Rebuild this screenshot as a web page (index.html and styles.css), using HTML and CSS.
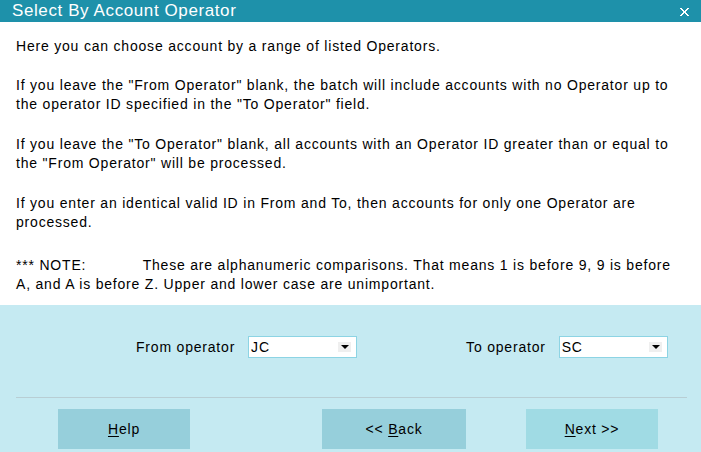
FILE: index.html
```html
<!DOCTYPE html>
<html>
<head>
<meta charset="utf-8">
<link rel="stylesheet" href="styles.css">
</head>
<body>
<div class="dialog">
  <div class="titlebar">
    <span class="title">Select By Account Operator</span>
    <svg class="close" width="9" height="8" viewBox="0 0 9 8"><path d="M0 0h2v1h1v1h1v1h1V2h1V1h1V0h2v1H8v1H7v1H6v2h1v1h1v1h1v1H7V7H6V6H5V5H4v1H3v1H2v1H0V7h1V6h1V5h1V3H2V2H1V1H0z" fill="#fff"/></svg>
  </div>
  <div class="content">
    <p class="intro">Here you can choose account by a range of listed Operators.</p>
    <p>If you leave the "From Operator" blank, the batch will include accounts with no Operator up to the operator ID specified in the "To Operator" field.</p>
    <p>If you leave the "To Operator" blank, all accounts with an Operator ID greater than or equal to the "From Operator" will be processed.</p>
    <p>If you enter an identical valid ID in From and To, then accounts for only one Operator are processed.</p>
    <p class="note"><span class="note-label">*** NOTE:</span> These are alphanumeric comparisons. That means 1 is before 9, 9 is before A, and A is before Z. Upper and lower case are unimportant.</p>
  </div>
  <div class="footer">
    <div class="fields">
      <div class="field from">
        <span class="label">From operator</span>
        <div class="combo"><span class="value">JC</span><span class="arrow"></span></div>
      </div>
      <div class="field to">
        <span class="label">To operator</span>
        <div class="combo"><span class="value">SC</span><span class="arrow"></span></div>
      </div>
    </div>
    <div class="separator"></div>
    <div class="buttons">
      <div class="btn help"><span><u>H</u>elp</span></div>
      <div class="btn back"><span>&lt;&lt; <u>B</u>ack</span></div>
      <div class="btn next"><span><u>N</u>ext &gt;&gt;</span></div>
    </div>
  </div>
</div>
</body>
</html>
```
FILE: styles.css
```css
* { box-sizing: border-box; }
html, body { margin: 0; padding: 0; }
body {
  width: 701px;
  height: 452px;
  overflow: hidden;
  font-family: "Liberation Sans", Arial, sans-serif;
  color: #000;
  background: #c5eaf2;
  letter-spacing: 0.8px;
}
.dialog {
  width: 701px;
  height: 452px;
  display: flex;
  flex-direction: column;
}
.titlebar {
  height: 22px;
  background: #1e91aa;
  display: flex;
  align-items: center;
  justify-content: space-between;
  padding: 0 12px 0 12px;
  flex: none;
}
.title {
  color: #fff;
  font-size: 17px;
  line-height: 22px;
  letter-spacing: 0.6px;
}
.close { display: block; margin-top: 1px; }
.content {
  background: #fff;
  height: 283px;
  padding: 15px 22px 0 16px;
  font-size: 14px;
  line-height: 19px;
  flex: none;
}
.content p {
  margin: 0 0 21px 0;
}
.content p.intro { margin-bottom: 20px; }
.content p.note { margin-top: 24px; }
.note-label {
  margin-right: 52px;
}
.footer {
  flex: 1;
  background: #c5eaf2;
  display: flex;
  flex-direction: column;
}
.fields {
  display: flex;
  height: 92px;
  padding-top: 31px;
  font-size: 14px;
}
.field {
  display: flex;
  align-items: flex-start;
}
.field .label {
  line-height: 22px;
  margin-right: 13px;
}
.field.from { margin-left: 136px; }
.field.to { margin-left: 109px; }
.combo {
  width: 109px;
  height: 22px;
  background: #fff;
  border: 1px solid #8dd4e4;
  display: flex;
  align-items: center;
  justify-content: space-between;
  padding: 0 5px 0 2px;
}
.combo .value { line-height: 20px; font-size: 14px; }
.combo .arrow {
  width: 13px;
  height: 10px;
  background: #efefef;
  position: relative;
}
.combo .arrow::after {
  content: "";
  position: absolute;
  left: 3px;
  top: 3px;
  border-left: 4px solid transparent;
  border-right: 4px solid transparent;
  border-top: 4px solid #000;
}
.separator {
  height: 1px;
  background: #b8ced4;
  margin: 0 14px 0 16px;
}
.buttons {
  display: flex;
  padding-top: 11px;
}
.btn {
  height: 40px;
  display: flex;
  align-items: center;
  justify-content: center;
  font-size: 14px;
  background: #96cfdb;
}
.btn u { text-underline-offset: 2px; }
.btn.help { width: 132px; margin-left: 58px; }
.btn.back { width: 144px; margin-left: 132px; }
.btn.next { width: 132px; margin-left: 60px; background: #a0dbe4; }
```
